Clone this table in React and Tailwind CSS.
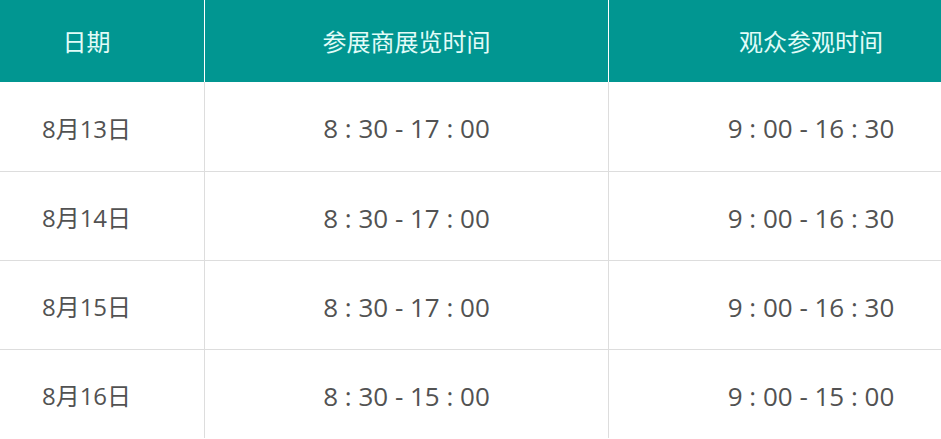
export default function App() {
  const rows = [
    ["8月13日", "8 : 30 - 17 : 00", "9 : 00 - 16 : 30"],
    ["8月14日", "8 : 30 - 17 : 00", "9 : 00 - 16 : 30"],
    ["8月15日", "8 : 30 - 17 : 00", "9 : 00 - 16 : 30"],
    ["8月16日", "8 : 30 - 15 : 00", "9 : 00 - 15 : 00"],
  ];
  const font = { fontFamily: '"Open Sans", "Noto Sans CJK SC", sans-serif' };
  return (
    <div className="w-[941px] h-[439px] overflow-hidden bg-white" style={font}>
      <div className="-ml-[31px] w-[1044px] flex flex-col">
        <div className="flex h-[82px] bg-[#019691] text-[#e2fcf8] text-[24px]">
          <div className="w-[236px] flex items-center justify-center border-r border-white pt-[2px]">日期</div>
          <div className="w-[404px] flex items-center justify-center border-r border-white pt-[2px]">参展商展览时间</div>
          <div className="w-[404px] flex items-center justify-center pt-[2px]">观众参观时间</div>
        </div>
        {rows.map((r, i) => (
          <div key={i} className={`flex h-[89px] text-[#525252] ${i > 0 ? "border-t border-[#dddddd]" : ""}`}>
            <div className="w-[236px] flex items-center justify-center border-r border-[#dddddd] pt-[4px] text-[24px]">{r[0]}</div>
            <div className="w-[404px] flex items-center justify-center border-r border-[#dddddd] pt-[4px] text-[26px] whitespace-pre">{r[1]}</div>
            <div className="w-[404px] flex items-center justify-center pt-[4px] text-[26px] whitespace-pre">{r[2]}</div>
          </div>
        ))}
      </div>
    </div>
  );
}
